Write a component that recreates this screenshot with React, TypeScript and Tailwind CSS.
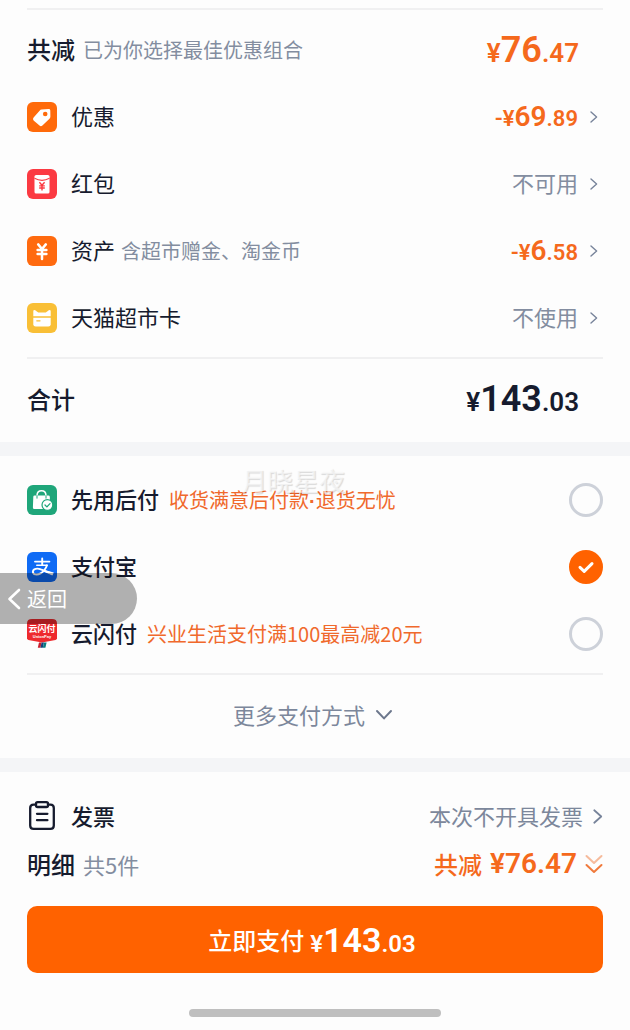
import { useState } from 'react'
import type { ReactNode } from 'react'
import clsx from 'clsx'

function TagIcon() {
  return (
    <svg viewBox="0 0 30 30" className="size-[30px] shrink-0" aria-hidden="true">
      <rect width="30" height="30" rx="6" fill="#ff6a0a" />
      <path
        d="M14.6 7.6 21.6 7Q23.2 6.9 23.3 8.4L23.4 14.6Q23.4 15.8 22.5 16.7L15.4 23.6Q13.9 24.9 12.5 23.6L6.6 18.4Q5.3 17 6.6 15.6L12.6 8.7Q13.4 7.7 14.6 7.6Z"
        fill="#fff"
      />
      <circle cx="18.2" cy="12" r="2.3" fill="#ff6a0a" />
    </svg>
  )
}

function RedPacketIcon() {
  return (
    <svg viewBox="0 0 30 30" className="size-[30px] shrink-0" aria-hidden="true">
      <rect width="30" height="30" rx="6" fill="#fb3a42" />
      <rect x="7.5" y="6" width="15" height="18.5" rx="1.6" fill="#fff" />
      <path d="M7.5 9.3Q15 13.4 22.5 9.3" fill="none" stroke="#fb3a42" strokeWidth="1.1" />
      <path
        d="M12.4 13.2 15 16.2 17.6 13.2M12.2 16.9H17.8M12.2 19H17.8M15 16.2V21.6"
        fill="none"
        stroke="#fb3a42"
        strokeWidth="1.4"
      />
    </svg>
  )
}

function AssetIcon() {
  return (
    <svg viewBox="0 0 30 30" className="size-[30px] shrink-0" aria-hidden="true">
      <rect width="30" height="30" rx="6" fill="#ff6a0f" />
      <path
        d="M11.2 8.4 15 13 18.8 8.4M10.6 14H19.4M10.6 18H19.4M15 13V23"
        fill="none"
        stroke="#fff"
        strokeWidth="2.5"
        strokeLinecap="round"
      />
    </svg>
  )
}

function CatCardIcon() {
  return (
    <svg viewBox="0 0 30 30" className="size-[30px] shrink-0" aria-hidden="true">
      <rect width="30" height="30" rx="6" fill="#f9bf36" />
      <path
        d="M6.3 13.2V8.3Q6.4 6.3 8.2 7.2L11.2 9.4H18.8L21.8 7.2Q23.6 6.3 23.7 8.3V13.2Z"
        fill="#fff"
      />
      <path d="M6.3 14.8H23.7V21.2Q23.7 23.6 21.3 23.6H8.7Q6.3 23.6 6.3 21.2Z" fill="#fff" />
      <path d="M9.8 17.8H13" stroke="#f9bf36" strokeWidth="1.3" strokeLinecap="round" />
    </svg>
  )
}

function PayLaterIcon() {
  return (
    <svg viewBox="0 0 30 30" className="size-[30px] shrink-0" aria-hidden="true">
      <rect width="30" height="30" rx="6" fill="#1fa67a" />
      <path d="M10 12.5V10.4Q10.2 5.8 14.5 5.8T19 10.4V12.5" fill="none" stroke="#fff" strokeWidth="1.5" />
      <path d="M7.6 10.6H21.4Q22.7 10.6 22.8 11.8L23.2 24H7.4Q5.8 24 5.9 22.4L6.3 11.8Q6.4 10.6 7.6 10.6Z" fill="#fff" />
      <path d="M10 10.6V13.2M19 10.6V13.2" stroke="#1fa67a" strokeWidth="1" strokeLinecap="round" />
      <circle cx="20.4" cy="20" r="5.4" fill="#fff" stroke="#1fa67a" strokeWidth="1.2" />
      <path
        d="M18 20 19.9 21.9 23 18.6"
        fill="none"
        stroke="#1fa67a"
        strokeWidth="1.3"
        strokeLinecap="round"
        strokeLinejoin="round"
      />
    </svg>
  )
}

function AlipayIcon() {
  return (
    <svg viewBox="0 0 30 30" className="size-[30px] shrink-0" aria-hidden="true">
      <rect width="30" height="30" rx="6" fill="#0f6bf5" />
      <g fill="none" stroke="#fff" strokeLinecap="round">
        <path d="M8 9.6H22.4M15.2 6.4V13" strokeWidth="1.9" />
        <path d="M9.8 13.3H20" strokeWidth="1.6" />
        <path d="M20 13.3Q18.2 18.6 13.6 21.4C10 23.4 5.9 22.6 5.9 19.7C6 16.6 10.4 16 13.8 17.4L25 21.6" strokeWidth="1.9" />
      </g>
      <path d="M17.6 18 26.8 20.6 25.4 23.6 16.4 19.4Z" fill="#fff" />
    </svg>
  )
}

function UnionPayIcon() {
  return (
    <svg viewBox="0 0 30 30" className="size-[30px] shrink-0" aria-hidden="true">
      <path d="M5 0H25Q30 0 30 4.4V19.2Q30 20.6 28.6 20.9L15 23.4 1.4 20.9Q0 20.6 0 19.2V4.4Q0 0 5 0Z" fill="#ee2a2e" />
      <text
        x="15"
        y="13.4"
        textAnchor="middle"
        fontSize="9"
        fontWeight="700"
        fill="#fff"
        fontFamily="Noto Sans CJK SC, sans-serif"
      >
        云闪付
      </text>
      <text x="15" y="18.6" textAnchor="middle" fontSize="4" fontWeight="700" fill="#fff" fontFamily="Liberation Sans, sans-serif">
        UnionPay
      </text>
      <path d="M12 23.6H14.6L13.4 28.8H10.8Z" fill="#c8202f" />
      <path d="M14.6 23.6H17L15.8 28.8H13.4Z" fill="#17407a" />
      <path d="M17 23.6H19.6L18.4 28.8H15.8Z" fill="#0b7c80" />
    </svg>
  )
}

function InvoiceIcon() {
  return (
    <svg
      viewBox="0 0 30 30"
      className="size-[30px] shrink-0"
      fill="none"
      stroke="#161b2e"
      strokeWidth="2.3"
      strokeLinecap="round"
      strokeLinejoin="round"
      aria-hidden="true"
    >
      <path d="M9 3.6H6.6Q3.2 3.6 3.2 7V24.4Q3.2 27.8 6.6 27.8H23.4Q26.8 27.8 26.8 24.4V7Q26.8 3.6 23.4 3.6H21" />
      <rect x="9" y="1.2" width="12" height="4.8" rx="1.6" />
      <path d="M10 12.8H20.4M10 19.2H20.4" />
    </svg>
  )
}

function ChevronRight({ className }: { className?: string }) {
  return (
    <svg viewBox="0 0 8 12" className={clsx('shrink-0', className)} fill="none" stroke="#77839a" aria-hidden="true">
      <path d="M1 1 6.6 6 1 11" strokeWidth="1.4" strokeLinecap="round" strokeLinejoin="round" />
    </svg>
  )
}

type AmountProps = {
  value: string
  negative?: boolean
  size: 'lg' | 'md' | 'button'
}

const amountSizes = {
  lg: { small: 'text-[26px]', big: 'text-[36px]' },
  md: { small: 'text-[22px]', big: 'text-[28px]' },
  button: { small: 'text-[24px]', big: 'text-[34px]' },
}

function Amount({ value, negative, size }: AmountProps) {
  const [whole, cents] = value.split('.')
  const { small, big } = amountSizes[size]

  return (
    <span className={clsx('font-[Roboto,sans-serif] font-semibold leading-none whitespace-nowrap', small)}>
      {negative && '-'}¥<span className={clsx('leading-none', big)}>{whole}</span>.{cents}
    </span>
  )
}

const discounts = [
  { label: '优惠', icon: <TagIcon />, amount: '69.89' },
  { label: '红包', icon: <RedPacketIcon />, status: '不可用' },
  { label: '资产', icon: <AssetIcon />, note: '含超市赠金、淘金币', amount: '6.58' },
  { label: '天猫超市卡', icon: <CatCardIcon />, status: '不使用' },
]

const payMethods = [
  { id: 'later', label: '先用后付', icon: <PayLaterIcon />, promo: ['收货满意后付款', '退货无忧'] },
  { id: 'alipay', label: '支付宝', icon: <AlipayIcon /> },
  { id: 'unionpay', label: '云闪付', icon: <UnionPayIcon />, promo: ['兴业生活支付满100最高减20元'] },
]

type PayRowProps = {
  id: string
  label: string
  icon: ReactNode
  promo?: string[]
  checked: boolean
  onSelect: () => void
}

function PayRow({ id, label, icon, promo, checked, onSelect }: PayRowProps) {
  return (
    <label className="flex h-[67px] cursor-pointer items-center">
      {icon}
      <span className="ml-3.5 pb-0.5 text-[22px] font-medium">{label}</span>
      {promo && (
        <span className="ml-2.5 text-[20px] text-[#f0692c]">
          {promo.map((part, index) => (
            <span key={part}>
              {index > 0 && <span className="font-['Liberation_Sans',sans-serif] leading-none font-bold">·</span>}
              {part}
            </span>
          ))}
        </span>
      )}
      <span className="relative ml-auto size-[34px] shrink-0">
        <input
          type="radio"
          name="pay"
          value={id}
          checked={checked}
          onChange={onSelect}
          className="block size-full appearance-none rounded-full border-3 border-[#cdd1d9] checked:border-[#ff6200] checked:bg-[#ff6200]"
        />
        {checked && (
          <svg viewBox="0 0 34 34" className="pointer-events-none absolute inset-0" fill="none" aria-hidden="true">
            <path d="M11 17.4 15.2 21.4 23 13.6" stroke="#fff" strokeWidth="3" strokeLinecap="round" strokeLinejoin="round" />
          </svg>
        )}
      </span>
    </label>
  )
}

export default function App() {
  const [method, setMethod] = useState('alipay')

  return (
    <main className="relative min-h-screen bg-[#fdfdfd] font-['Noto_Sans_CJK_SC',sans-serif] text-[#161b2e]">
      <section className="px-[27px] pt-2">
        <hr className="border-t-2 border-[#f0f0f1]" />
        <div className="mt-1.5 flex h-[67px] items-center">
          <h2 className="pb-0.5 text-[24px] font-medium">共减</h2>
          <p className="ml-2 text-[20px] text-[#838da0]">已为你选择最佳优惠组合</p>
          <span className="ml-auto pr-6 text-[#f5691c]">
            <Amount value="76.47" size="lg" />
          </span>
        </div>

        {discounts.map((item) => (
          <button key={item.label} type="button" className="flex h-[67px] w-full items-center text-left">
            {item.icon}
            <span className="ml-3.5 pb-0.5 text-[22px]">{item.label}</span>
            {item.note && <span className="ml-1.5 text-[20px] text-[#838da0]">{item.note}</span>}
            {item.amount ? (
              <span className="ml-auto text-[#f5691c]">
                <Amount value={item.amount} size="md" negative />
              </span>
            ) : (
              <span className="ml-auto pb-0.5 text-[22px] text-[#838da0]">{item.status}</span>
            )}
            <ChevronRight className="mr-[5px] ml-3 h-3 w-2" />
          </button>
        ))}

        <hr className="mt-1.5 border-t-2 border-[#f0f0f1]" />
        <div className="flex h-[83px] items-center justify-between pb-1">
          <h2 className="text-[24px] font-medium">合计</h2>
          <span className="pr-6">
            <Amount value="143.03" size="lg" />
          </span>
        </div>
      </section>

      <div className="h-3.5 bg-[#f4f5f7]" />

      <section className="px-[27px] pt-2.5">
        {payMethods.map((item) => (
          <PayRow key={item.id} {...item} checked={method === item.id} onSelect={() => setMethod(item.id)} />
        ))}
        <hr className="mt-1.5 border-t-2 border-[#f0f0f1]" />
        <button
          type="button"
          className="flex h-[83px] w-full items-center justify-center gap-2.5 pr-1 pb-1 text-[22px] text-[#7c879b]"
        >
          更多支付方式
          <svg viewBox="0 0 18 12" className="h-3 w-[18px]" fill="none" stroke="#6c778c" aria-hidden="true">
            <path d="M2 2 9 9.4 16 2" strokeWidth="2" strokeLinecap="round" strokeLinejoin="round" />
          </svg>
        </button>
      </section>

      <div className="h-3.5 bg-[#f4f5f7]" />

      <section className="px-[27px] pt-5">
        <button type="button" className="flex h-12 w-full items-center text-[22px]">
          <InvoiceIcon />
          <span className="ml-3.5 pb-0.5 font-medium">发票</span>
          <span className="ml-auto pb-0.5 text-[#7c879b]">本次不开具发票</span>
          <ChevronRight className="ml-2.5 h-[15px] w-2.5" />
        </button>
        <div className="flex h-12 items-center">
          <h2 className="text-[24px] font-medium">明细</h2>
          <p className="ml-2 text-[22px] text-[#838da0]">共5件</p>
          <button type="button" className="ml-auto flex items-center text-[24px] font-medium text-[#f5691c]">
            共减
            <span className="ml-2 font-[Roboto,sans-serif] text-[28px] leading-none font-semibold">¥76.47</span>
            <svg viewBox="0 0 18 20" className="ml-2 h-5 w-[18px]" fill="none" stroke="#f07a3c" aria-hidden="true">
              <path d="M1.5 2 9 9 16.5 2" strokeWidth="2" opacity="0.5" strokeLinecap="round" strokeLinejoin="round" />
              <path d="M1.5 11 9 18 16.5 11" strokeWidth="2" strokeLinecap="round" strokeLinejoin="round" />
            </svg>
          </button>
        </div>
        <button
          type="button"
          className="mt-4.5 flex h-[67px] w-full items-center justify-center gap-1.5 rounded-[10px] bg-[#ff6200] pr-1.5 text-[24px] font-medium text-white"
        >
          立即支付
          <Amount value="143.03" size="button" />
        </button>
      </section>

      {/* Home indicator */}
      <div className="flex justify-center pt-9 pb-3">
        <div className="h-2 w-2/5 rounded-full bg-[#bfbfbf]" />
      </div>

      {/* Watermark */}
      <span className="pointer-events-none absolute top-[460px] left-[241px] text-[26px] font-medium text-white/60 [text-shadow:1px_1px_1px_rgba(0,0,0,0.14)]">
        月晓星夜
      </span>

      {/* Floating back button */}
      <button
        type="button"
        className="absolute top-[573px] left-0 flex h-[51px] w-[137px] items-center gap-1.5 rounded-r-full bg-black/30 pl-[7px] text-[20px] text-white"
      >
        <svg viewBox="0 0 14 22" className="h-[22px] w-3.5" fill="none" stroke="currentColor" aria-hidden="true">
          <path d="M12 2 2.5 11 12 20" strokeWidth="2.6" strokeLinecap="round" strokeLinejoin="round" />
        </svg>
        返回
      </button>
    </main>
  )
}
